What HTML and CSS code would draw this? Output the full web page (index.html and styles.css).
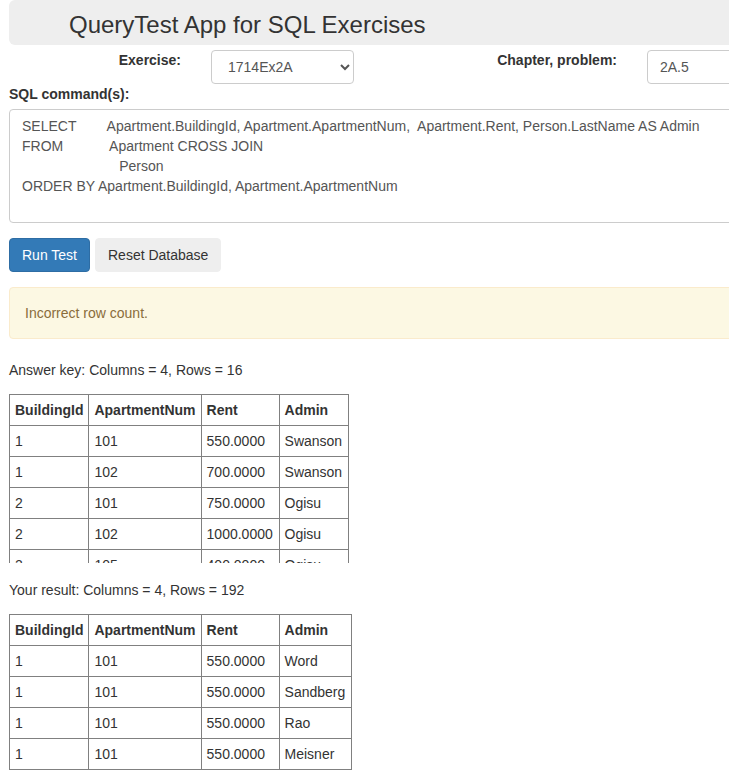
FILE: index.html
```html
<!DOCTYPE html>
<html>
<head>
<meta charset="utf-8">
<link rel="stylesheet" href="styles.css">
</head>
<body>
<div class="page">
  <div class="header"><h1 class="title">QueryTest App for SQL Exercises</h1></div>

  <div class="pick-row">
    <label class="pick-label lbl-ex">Exercise:</label>
    <div class="pick-field fld-ex">
      <select class="form-control select-ex"><option>1714Ex2A</option></select>
    </div>
    <label class="pick-label lbl-ch">Chapter, problem:</label>
    <div class="pick-field fld-ch">
      <input class="form-control input-ch" type="text" value="2A.5">
    </div>
  </div>

  <label class="sql-label">SQL command(s):</label>
  <textarea class="form-control sql" rows="5">SELECT        Apartment.BuildingId, Apartment.ApartmentNum,  Apartment.Rent, Person.LastName AS Admin
FROM            Apartment CROSS JOIN
                         Person
ORDER BY Apartment.BuildingId, Apartment.ApartmentNum</textarea>

  <div class="buttons">
    <button class="btn btn-primary">Run Test</button>
    <button class="btn btn-default">Reset Database</button>
  </div>

  <div class="alert">Incorrect row count.</div>

  <p class="summary">Answer key: Columns = 4, Rows = 16</p>
  <div class="result-box">
    <table class="result key">
      <thead><tr><th>BuildingId</th><th>ApartmentNum</th><th class="c-rent">Rent</th><th class="c-admin">Admin</th></tr></thead>
      <tbody>
        <tr><td>1</td><td>101</td><td>550.0000</td><td>Swanson</td></tr>
        <tr><td>1</td><td>102</td><td>700.0000</td><td>Swanson</td></tr>
        <tr><td>2</td><td>101</td><td>750.0000</td><td>Ogisu</td></tr>
        <tr><td>2</td><td>102</td><td>1000.0000</td><td>Ogisu</td></tr>
        <tr><td>2</td><td>105</td><td>400.0000</td><td>Ogisu</td></tr>
        <tr><td>2</td><td>201</td><td>800.0000</td><td>Ogisu</td></tr>
      </tbody>
    </table>
  </div>

  <p class="summary">Your result: Columns = 4, Rows = 192</p>
  <div class="result-box result-box-full">
    <table class="result yours">
      <thead><tr><th>BuildingId</th><th>ApartmentNum</th><th class="c-rent">Rent</th><th class="c-admin">Admin</th></tr></thead>
      <tbody>
        <tr><td>1</td><td>101</td><td>550.0000</td><td>Word</td></tr>
        <tr><td>1</td><td>101</td><td>550.0000</td><td>Sandberg</td></tr>
        <tr><td>1</td><td>101</td><td>550.0000</td><td>Rao</td></tr>
        <tr><td>1</td><td>101</td><td>550.0000</td><td>Meisner</td></tr>
      </tbody>
    </table>
  </div>
</div>
</body>
</html>
```

FILE: styles.css
```css
html { overflow: hidden; }
body {
  margin: 0;
  font-family: "Liberation Sans", Arial, sans-serif;
  font-size: 14px;
  line-height: 20px;
  color: #333;
  background: #fff;
}
.page {
  margin-left: 9px;
  width: 760px;
}
.header {
  box-sizing: border-box;
  height: 45px;
  background: #eee;
  border-radius: 6px;
  display: flex;
  align-items: center;
  padding: 4px 0 0 60px;
}
.title {
  margin: 0;
  font-size: 24px;
  font-weight: normal;
  line-height: 28px;
  color: #333;
}
.pick-row {
  display: flex;
  align-items: flex-start;
  margin-top: 5px;
}
.pick-label {
  font-weight: bold;
  text-align: right;
  padding-right: 15px;
  box-sizing: border-box;
  flex: none;
}
.lbl-ex { width: 187px; }
.fld-ex { width: 174px; padding-left: 15px; box-sizing: border-box; flex: none; }
.lbl-ch { width: 262px; }
.fld-ch { padding-left: 15px; flex: 1; }
.form-control {
  display: block;
  box-sizing: border-box;
  height: 34px;
  padding: 6px 12px;
  font-family: inherit;
  font-size: 14px;
  line-height: 20px;
  color: #555;
  background: #fff;
  border: 1px solid #ccc;
  border-radius: 4px;
}
.select-ex { width: 143px; padding: 6px 8px 6px 12px; }
.input-ch { width: 120px; }
.sql-label {
  display: block;
  font-weight: bold;
  margin-bottom: 5px;
}
.sql {
  width: 760px;
  height: 114px;
  resize: none;
  white-space: pre;
  overflow: hidden;
}
.buttons {
  display: flex;
  gap: 5px;
  margin-top: 15px;
}
.btn {
  height: 34px;
  padding: 6px 12px;
  font-family: inherit;
  font-size: 14px;
  line-height: 20px;
  white-space: nowrap;
  border-radius: 4px;
  border: 1px solid transparent;
}
.btn-primary {
  color: #fff;
  background: #337ab7;
  border-color: #2e6da4;
}
.btn-default {
  color: #333;
  background: #eee;
  border-color: #eee;
}
.alert {
  margin-top: 15px;
  padding: 15px;
  background: #fcf8e3;
  border: 1px solid #faebcc;
  border-radius: 4px;
  color: #8a6d3b;
}
.summary {
  margin: 20px 0 14px;
  padding-top: 1px;
}
.result-box {
  height: 169px;
  overflow: hidden;
}
.result-box-full { height: auto; }
.result-box + .summary { margin-top: 16px; }
.result {
  border-collapse: collapse;
  border: 1px solid #808080;
}
.result th, .result td {
  border: 1px solid #808080;
  padding: 5px;
  text-align: left;
  line-height: 20px;
  white-space: nowrap;
}
.result th { font-weight: bold; }
.result td { font-weight: normal; }
.result .c-rent { width: 67px; }
.key .c-admin { width: 58px; }
.yours .c-admin { width: 61px; }
```
